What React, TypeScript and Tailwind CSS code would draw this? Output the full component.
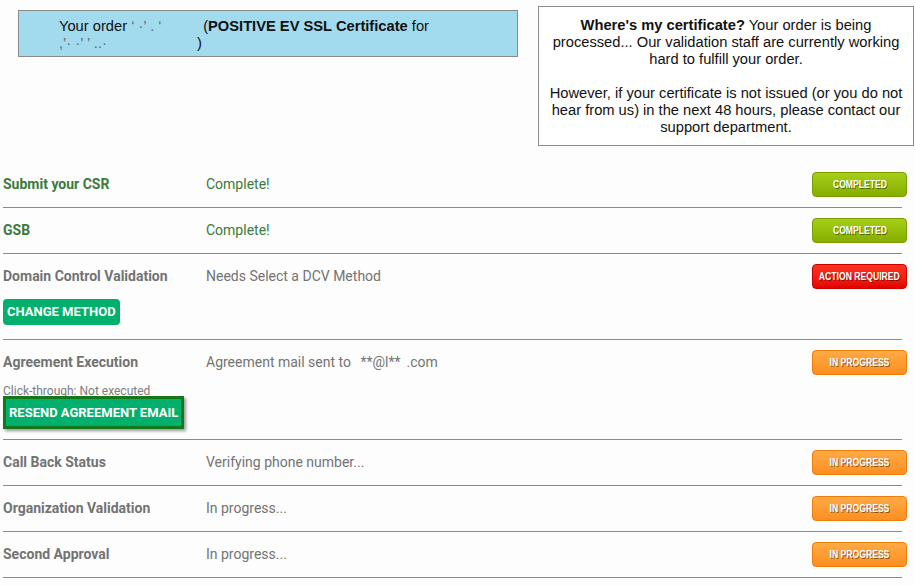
import React from "react"

type Tone = "done" | "action" | "progress"

const badgeTone: Record<Tone, string> = {
  done: "bg-gradient-to-b from-[#a6cf17] to-[#86ad00] border-[#7a9e00]",
  action: "bg-gradient-to-b from-[#ff3322] to-[#e30000] border-[#c80000]",
  progress: "bg-gradient-to-b from-[#ffaa44] to-[#fb8f1f] border-[#ee7d0a]",
}

const badgeLabel: Record<Tone, string> = {
  done: "COMPLETED",
  action: "ACTION REQUIRED",
  progress: "IN PROGRESS",
}

function Badge({ tone }: { tone: Tone }) {
  return (
    <span
      className={`-mr-[5px] flex h-[25px] w-[95px] shrink-0 items-center justify-center rounded-[4px] border text-white ${badgeTone[tone]}`}
    >
      <span className="inline-block scale-x-[0.82] whitespace-nowrap text-[10.5px] font-bold [font-family:'Liberation_Sans',Arial,sans-serif] [text-shadow:1px_1px_0_rgba(0,0,0,0.45)]">
        {badgeLabel[tone]}
      </span>
    </span>
  )
}

type Step = {
  label: string
  status: React.ReactNode
  tone: Tone
  extra?: React.ReactNode
}

const steps: Step[] = [
  { label: "Submit your CSR", status: "Complete!", tone: "done" },
  { label: "GSB", status: "Complete!", tone: "done" },
  {
    label: "Domain Control Validation",
    status: "Needs Select a DCV Method",
    tone: "action",
    extra: (
      <div className="pb-[14px]">
        <button className="h-[26px] rounded-[4px] bg-[#00b06c] px-[4px] text-[13px] font-bold text-white">
          CHANGE METHOD
        </button>
      </div>
    ),
  },
  {
    label: "Agreement Execution",
    status: (
      <>
        Agreement mail sent to <span className="ml-[6px]">**@l**</span>
        <span className="ml-[6px]">.com</span>
      </>
    ),
    tone: "progress",
    extra: (
      <div className="pb-[10px]">
        <p className="text-[12px] leading-[12px] text-[#7d7d7d]">Click-through: Not executed</p>
        <button className="relative -mt-[1px] h-[33px] border-[3px] border-[#16761a] bg-[#00b06c] px-[3px] text-[13px] font-bold text-white shadow-[2px_2px_3px_rgba(0,0,0,0.4)]">
          RESEND AGREEMENT EMAIL
        </button>
      </div>
    ),
  },
  { label: "Call Back Status", status: "Verifying phone number...", tone: "progress" },
  { label: "Organization Validation", status: "In progress...", tone: "progress" },
  { label: "Second Approval", status: "In progress...", tone: "progress" },
]

export default function App() {
  return (
    <div className="min-h-[586px] w-[915px] bg-[#fdfdfd] text-[14px] [font-family:Roboto,sans-serif]">
      <div className="flex items-start text-[14.7px] [font-family:'Liberation_Sans',Arial,sans-serif]">
        <div className="ml-[18px] mt-[10px] h-[47px] w-[500px] border border-[#8a8a8a] bg-[#a2daee] pl-[40px] pt-[7px] leading-[17px] text-[#111]">
          Your order <span className="inline-block w-[72px] text-[#666]">‘ ·’  .  ‘</span>
          (<b>POSITIVE EV SSL Certificate</b> for
          <br />
          <span className="inline-block w-[138px] text-[#666]">,’·   ·’  ’  ..·</span>)
        </div>
        <div className="ml-[20px] mt-[6px] w-[376px] border border-[#8a8a8a] bg-white px-[10px] pb-[9px] pt-[10px] text-center leading-[17px] text-[#111]">
          <p>
            <b>Where's my certificate?</b> Your order is being processed... Our validation staff are currently working
            hard to fulfill your order.
          </p>
          <p className="mt-[17px]">
            However, if your certificate is not issued (or you do not hear from us) in the next 48 hours, please contact
            our support department.
          </p>
        </div>
      </div>

      <div className="ml-[3px] mt-[16px] w-[899px]">
        {steps.map((s) => {
          const green = s.tone === "done"
          return (
            <div key={s.label} className="border-b border-[#8a8a8a]">
              <div className="flex h-[45px] items-center">
                <span className={`w-[203px] font-bold ${green ? "text-[#3b7a3b]" : "text-[#737373]"}`}>{s.label}</span>
                <span className={`flex-1 ${green ? "text-[#3b7a3b]" : "text-[#737373]"}`}>{s.status}</span>
                <Badge tone={s.tone} />
              </div>
              {s.extra}
            </div>
          )
        })}
      </div>
    </div>
  )
}
